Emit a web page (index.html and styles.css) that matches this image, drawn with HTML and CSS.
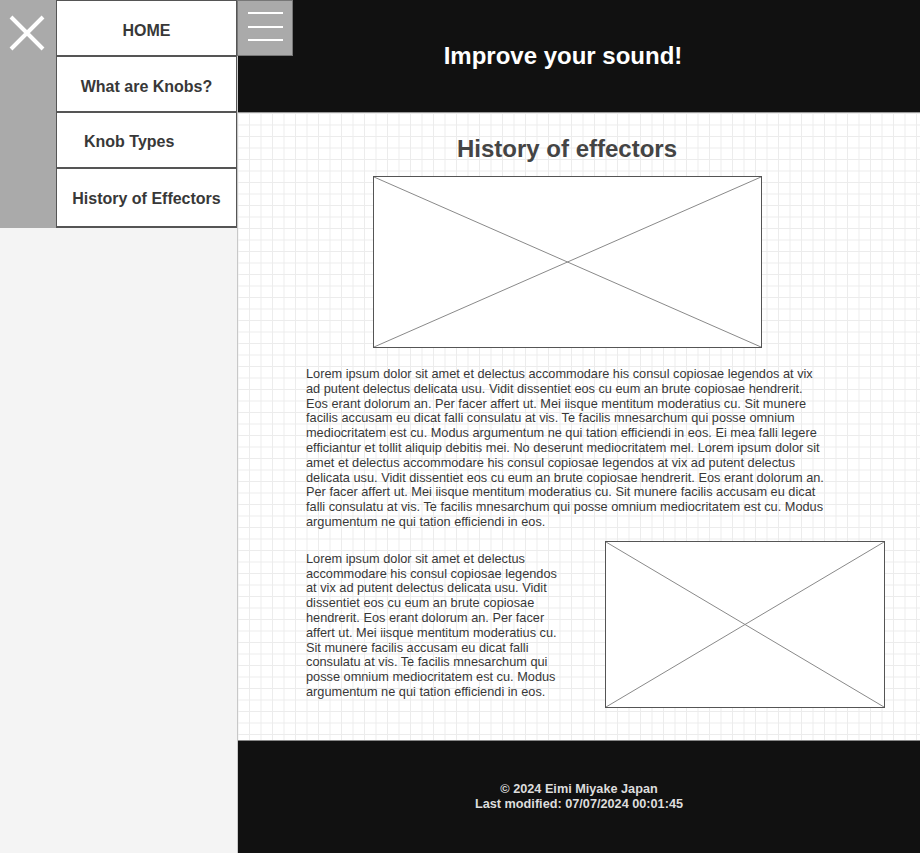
FILE: index.html
```html
<!DOCTYPE html>
<html lang="en">
<head>
<meta charset="utf-8">
<title>Improve your sound!</title>
<link rel="stylesheet" href="styles.css">
</head>
<body>
<div class="page">
  <aside class="sidebar">
    <div class="drawer">
      <div class="close-col">
        <button class="close" aria-label="Close menu">
          <svg width="36" height="36" viewBox="0 0 36 36"><path d="M2 2 L34 34 M34 2 L2 34" stroke="#fff" stroke-width="4" fill="none"/></svg>
        </button>
      </div>
      <nav class="menu">
        <a class="menu-item" href="#">HOME</a>
        <a class="menu-item menu-item-low" href="#">What are Knobs?</a>
        <a class="menu-item menu-item-left" href="#">Knob Types</a>
        <a class="menu-item menu-item-tall" href="#">History of Effectors</a>
      </nav>
    </div>
  </aside>
  <div class="main">
    <header class="topbar">
      <button class="burger" aria-label="Open menu"><span></span><span></span><span></span></button>
      <h1 class="site-title">Improve your sound!</h1>
    </header>
    <main class="content">
      <h2 class="page-title">History of effectors</h2>
      <div class="placeholder placeholder-wide">
        <svg width="100%" height="100%" viewBox="0 0 388 171" preserveAspectRatio="none"><line x1="0" y1="0" x2="388" y2="171" stroke="#888" stroke-width="1"/><line x1="388" y1="0" x2="0" y2="171" stroke="#888" stroke-width="1"/></svg>
      </div>
      <p class="lead">Lorem ipsum dolor sit amet et delectus accommodare his consul copiosae legendos at vix ad putent delectus delicata usu. Vidit dissentiet eos cu eum an brute copiosae hendrerit. Eos erant dolorum an. Per facer affert ut. Mei iisque mentitum moderatius cu. Sit munere facilis accusam eu dicat falli consulatu at vis. Te facilis mnesarchum qui posse omnium mediocritatem est cu. Modus argumentum ne qui tation efficiendi in eos. Ei mea falli legere efficiantur et tollit aliquip debitis mei. No deserunt mediocritatem mel. Lorem ipsum dolor sit amet et delectus accommodare his consul copiosae legendos at vix ad putent delectus delicata usu. Vidit dissentiet eos cu eum an brute copiosae hendrerit. Eos erant dolorum an. Per facer affert ut. Mei iisque mentitum moderatius cu. Sit munere facilis accusam eu dicat falli consulatu at vis. Te facilis mnesarchum qui posse omnium mediocritatem est cu. Modus argumentum ne qui tation efficiendi in eos.</p>
      <section class="feature">
        <p class="feature-text">Lorem ipsum dolor sit amet et delectus accommodare his consul copiosae legendos at vix ad putent delectus delicata usu. Vidit dissentiet eos cu eum an brute copiosae hendrerit. Eos erant dolorum an. Per facer affert ut. Mei iisque mentitum moderatius cu. Sit munere facilis accusam eu dicat falli consulatu at vis. Te facilis mnesarchum qui posse omnium mediocritatem est cu. Modus argumentum ne qui tation efficiendi in eos.</p>
        <div class="placeholder placeholder-side">
          <svg width="100%" height="100%" viewBox="0 0 279 166" preserveAspectRatio="none"><line x1="0" y1="0" x2="279" y2="166" stroke="#888" stroke-width="1"/><line x1="279" y1="0" x2="0" y2="166" stroke="#888" stroke-width="1"/></svg>
        </div>
      </section>
    </main>
    <footer class="footer">
      <p>© 2024 Eimi Miyake Japan</p>
      <p>Last modified: 07/07/2024 00:01:45</p>
    </footer>
  </div>
</div>
</body>
</html>
```

FILE: styles.css
```css
* { box-sizing: border-box; }

html, body {
  margin: 0;
  padding: 0;
}

body {
  font-family: "Liberation Sans", Arial, sans-serif;
  background: #f4f4f4;
  color: #333;
}

.page {
  display: flex;
  min-height: 100vh;
}

.sidebar {
  width: 237px;
  flex: 0 0 237px;
  background: #f4f4f4;
}

.drawer {
  display: flex;
  align-items: stretch;
}

.close-col {
  width: 56px;
  background: #aaa;
}

.close {
  display: block;
  width: 56px;
  height: 56px;
  border: 0;
  background: transparent;
  padding: 10px 0 0 9px;
  text-align: left;
  cursor: pointer;
}

.close svg { display: block; }

.menu {
  width: 181px;
  display: flex;
  flex-direction: column;
}

.menu-item {
  display: flex;
  align-items: center;
  justify-content: center;
  height: 56px;
  background: #fff;
  border: 1px solid #555;
  border-top-width: 0;
  border-bottom-width: 2px;
  color: #383838;
  font-weight: bold;
  font-size: 16px;
  text-decoration: none;
}

.menu-item:first-child {
  height: 57px;
  border-top-width: 1px;
  padding-top: 5px;
}

.menu-item-low {
  padding-top: 5px;
}

.menu-item-left {
  justify-content: flex-start;
  padding-left: 27px;
  padding-top: 3px;
}

.menu-item-tall {
  height: 59px;
  padding-top: 3px;
}

.main {
  flex: 1;
  display: flex;
  flex-direction: column;
  border-left: 1px solid #c8c8c8;
  background-color: #fff;
}

.topbar {
  position: relative;
  height: 113px;
  background: #111;
  display: flex;
  align-items: center;
  justify-content: center;
  padding-right: 32px;
  border-bottom: 1px solid #999;
}

.burger {
  position: absolute;
  left: -1px;
  top: 0;
  width: 56px;
  height: 56px;
  background: #aaa;
  border: 1px solid #777;
  padding: 11px 0 0 10px;
  display: flex;
  flex-direction: column;
  gap: 11.7px;
  cursor: pointer;
}

.burger span {
  display: block;
  width: 35px;
  height: 2px;
  background: #fff;
}

.site-title {
  margin: 0;
  color: #fff;
  font-size: 24px;
  font-weight: bold;
  line-height: 28px;
}

.content {
  flex: 1;
  padding: 22px 24px 31px 0;
  background-color: #fff;
  background-image:
    linear-gradient(to right, #ececec 1px, transparent 1px),
    linear-gradient(to bottom, #ececec 1px, transparent 1px);
  background-size: 11.5px 11.5px;
  background-position: 11px 0;
}

.page-title {
  margin: 0 0 13px;
  text-align: center;
  font-size: 24px;
  line-height: 28px;
  color: #444;
  font-weight: bold;
}

.placeholder {
  background: #fff;
  border: 1.5px solid #555;
}

.placeholder svg { display: block; }

.placeholder-wide {
  width: 389px;
  height: 172px;
  margin: 0 auto;
}

.lead {
  max-width: 522px;
  margin: 19px auto 0;
  font-size: 12.75px;
  line-height: 14.8px;
  color: #383838;
}

.feature {
  display: flex;
  align-items: flex-start;
  justify-content: space-between;
  width: 579px;
  margin: 11px 0 0 68px;
}

.feature-text {
  width: 256px;
  margin: 11px 0 0;
  font-size: 12.75px;
  line-height: 14.8px;
  color: #383838;
}

.placeholder-side {
  width: 280px;
  height: 167px;
}

.footer {
  height: 113px;
  background: #111;
  border-top: 1px solid #888;
  display: flex;
  flex-direction: column;
  align-items: center;
  justify-content: center;
  color: #ddd;
  font-weight: bold;
  font-size: 12.7px;
  line-height: 15px;
}

.footer p { margin: 0; }
```
